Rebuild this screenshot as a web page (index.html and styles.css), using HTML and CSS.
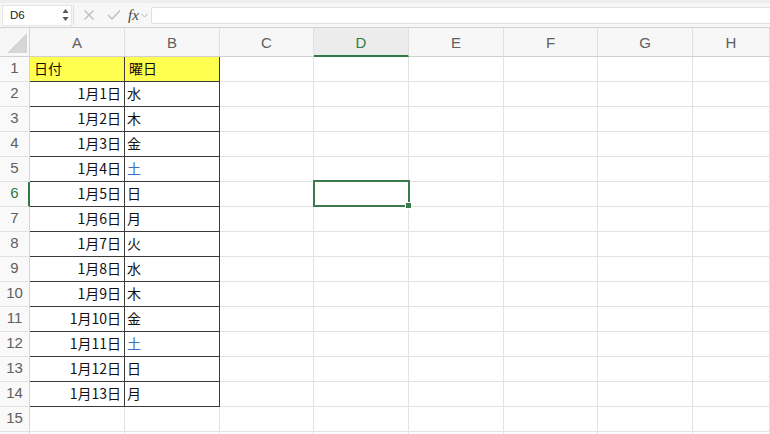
FILE: index.html
```html
<!DOCTYPE html>
<html lang="ja">
<head>
<meta charset="utf-8">
<title>Sheet</title>
<link rel="stylesheet" href="styles.css">
</head>
<body>
<div class="toolbar">
  <div class="namebox">
    <span class="ref">D6</span>
    <svg class="stepper" width="7" height="14" viewBox="0 0 7 14"><polygon points="3.5,1 6.5,5 0.5,5" fill="#555"/><polygon points="3.5,13 6.5,9 0.5,9" fill="#555"/></svg>
  </div>
  <div class="sep"></div>
  <svg class="ico x" width="12" height="12" viewBox="0 0 12 12"><path d="M1.5 1.5 L10.5 10.5 M10.5 1.5 L1.5 10.5" stroke="#bdbdbd" stroke-width="1.3" fill="none"/></svg>
  <svg class="ico ok" width="14" height="12" viewBox="0 0 14 12"><path d="M1 6 L5 10 L13 1.5" stroke="#bdbdbd" stroke-width="1.3" fill="none"/></svg>
  <span class="fx">fx</span>
  <svg class="chev" width="7" height="5" viewBox="0 0 7 5"><path d="M0.5 0.8 L3.5 4 L6.5 0.8" stroke="#b5b5b5" stroke-width="1" fill="none"/></svg>
  <div class="formula"></div>
</div>
<div class="sheet">
  <div class="corner"><svg width="20" height="20" viewBox="0 0 20 20"><polygon points="20,0 20,20 0,20" fill="#d6d6d6"/></svg></div>
  <div class="ch">A</div><div class="ch">B</div><div class="ch">C</div><div class="ch sel">D</div><div class="ch">E</div><div class="ch">F</div><div class="ch">G</div><div class="ch">H</div>

  <div class="rh">1</div><div class="c d hd">日付</div><div class="c d hd">曜日</div><div class="c"></div><div class="c"></div><div class="c"></div><div class="c"></div><div class="c"></div><div class="c"></div>
  <div class="rh">2</div><div class="c d r">1月1日</div><div class="c d">水</div><div class="c"></div><div class="c"></div><div class="c"></div><div class="c"></div><div class="c"></div><div class="c"></div>
  <div class="rh">3</div><div class="c d r">1月2日</div><div class="c d">木</div><div class="c"></div><div class="c"></div><div class="c"></div><div class="c"></div><div class="c"></div><div class="c"></div>
  <div class="rh">4</div><div class="c d r">1月3日</div><div class="c d">金</div><div class="c"></div><div class="c"></div><div class="c"></div><div class="c"></div><div class="c"></div><div class="c"></div>
  <div class="rh">5</div><div class="c d r">1月4日</div><div class="c d blue">土</div><div class="c"></div><div class="c"></div><div class="c"></div><div class="c"></div><div class="c"></div><div class="c"></div>
  <div class="rh sel">6</div><div class="c d r">1月5日</div><div class="c d">日</div><div class="c"></div><div class="c active"><span class="cursor"><span class="handle"></span></span></div><div class="c"></div><div class="c"></div><div class="c"></div><div class="c"></div>
  <div class="rh">7</div><div class="c d r">1月6日</div><div class="c d">月</div><div class="c"></div><div class="c"></div><div class="c"></div><div class="c"></div><div class="c"></div><div class="c"></div>
  <div class="rh">8</div><div class="c d r">1月7日</div><div class="c d">火</div><div class="c"></div><div class="c"></div><div class="c"></div><div class="c"></div><div class="c"></div><div class="c"></div>
  <div class="rh">9</div><div class="c d r">1月8日</div><div class="c d">水</div><div class="c"></div><div class="c"></div><div class="c"></div><div class="c"></div><div class="c"></div><div class="c"></div>
  <div class="rh">10</div><div class="c d r">1月9日</div><div class="c d">木</div><div class="c"></div><div class="c"></div><div class="c"></div><div class="c"></div><div class="c"></div><div class="c"></div>
  <div class="rh">11</div><div class="c d r">1月10日</div><div class="c d">金</div><div class="c"></div><div class="c"></div><div class="c"></div><div class="c"></div><div class="c"></div><div class="c"></div>
  <div class="rh">12</div><div class="c d r">1月11日</div><div class="c d blue">土</div><div class="c"></div><div class="c"></div><div class="c"></div><div class="c"></div><div class="c"></div><div class="c"></div>
  <div class="rh">13</div><div class="c d r">1月12日</div><div class="c d">日</div><div class="c"></div><div class="c"></div><div class="c"></div><div class="c"></div><div class="c"></div><div class="c"></div>
  <div class="rh">14</div><div class="c d r">1月13日</div><div class="c d">月</div><div class="c"></div><div class="c"></div><div class="c"></div><div class="c"></div><div class="c"></div><div class="c"></div>
  <div class="rh">15</div><div class="c"></div><div class="c"></div><div class="c"></div><div class="c"></div><div class="c"></div><div class="c"></div><div class="c"></div><div class="c"></div>
  <div class="rh"></div><div class="c"></div><div class="c"></div><div class="c"></div><div class="c"></div><div class="c"></div><div class="c"></div><div class="c"></div><div class="c"></div>
</div>
</body>
</html>
```
FILE: styles.css
```css
html, body {
  margin: 0;
  padding: 0;
  background: #ffffff;
  overflow: hidden;
}
body {
  width: 770px;
  height: 434px;
  font-family: "Noto Sans CJK JP", "Noto Sans", sans-serif;
}
.toolbar {
  height: 28px;
  box-sizing: border-box;
  background: #f7f7f7;
  border-top: 3px solid #eeeeee;
  border-bottom: 1px solid #d2d2d2;
  display: flex;
  align-items: center;
  padding-left: 2px;
}
.namebox {
  width: 70px;
  height: 21px;
  box-sizing: border-box;
  background: #ffffff;
  border: 1px solid #e6e6e6;
  display: flex;
  align-items: center;
  justify-content: space-between;
  padding: 0 2px 0 7px;
}
.ref {
  font-family: "Liberation Sans", Arial, sans-serif;
  font-size: 11.5px;
  color: #222222;
}
.stepper { display: block; }
.sep {
  width: 1px;
  height: 20px;
  background: #dedede;
  margin: 0 10px 0 1px;
}
.ico { display: block; }
.ico.x { margin-left: -1px; margin-right: 12px; }
.ico.ok { margin-right: 7px; }
.fx {
  font-family: "Liberation Serif", "Times New Roman", serif;
  font-style: italic;
  font-size: 15px;
  color: #444444;
  margin-right: 2px;
  line-height: 1;
}
.chev { display: block; margin-right: 3px; }
.formula {
  flex: 1;
  height: 17px;
  box-sizing: border-box;
  background: #ffffff;
  border: 1px solid #e0e0e0;
  border-right: none;
  border-radius: 2px 0 0 2px;
}
.sheet {
  display: grid;
  grid-template-columns: 30px 95px 95px 94px 95px 95px 94px 95px 1fr;
  grid-template-rows: 29px repeat(16, 25px);
}
.corner {
  background: #f7f7f7;
  border-right: 1px solid #d6d6d6;
  border-bottom: 1px solid #cfcfcf;
  box-sizing: border-box;
  display: flex;
  align-items: flex-end;
  justify-content: flex-end;
  padding: 0 2px 3px 0;
}
.corner svg { display: block; }
.ch {
  background: #f7f7f7;
  border-right: 1px solid #e0e0e0;
  border-bottom: 1px solid #cfcfcf;
  box-sizing: border-box;
  color: #606060;
  font-family: "Liberation Sans", Arial, sans-serif;
  font-size: 15px;
  display: flex;
  align-items: center;
  justify-content: center;
}
.ch.sel {
  background: #ececec;
  color: #2f7a45;
  border-bottom: 2px solid #2f7a45;
  padding-top: 1px;
}
.rh {
  background: #f9f9f9;
  border-right: 1px solid #d6d6d6;
  border-bottom: 1px solid #e2e2e2;
  box-sizing: border-box;
  color: #606060;
  font-family: "Liberation Sans", Arial, sans-serif;
  font-size: 15px;
  display: flex;
  align-items: center;
  justify-content: center;
  padding-bottom: 3px;
}
.rh.sel {
  color: #2f7a45;
  border-right: 2px solid #2f7a45;
  padding-left: 1px;
}
.c {
  border-right: 1px solid #e2e2e2;
  border-bottom: 1px solid #e2e2e2;
  box-sizing: border-box;
  font-size: 14px;
  color: #111111;
  display: flex;
  align-items: center;
  padding: 0 3px 3px 2px;
  white-space: nowrap;
}
.c.d {
  border-right-color: #3a3a3a;
  border-bottom-color: #3a3a3a;
}
.c.hd {
  background: #ffff4f;
  padding-left: 4px;
}
.c.r {
  justify-content: flex-end;
  padding-right: 3px;
}
.c.blue { color: #3f6fc0; }
.c.active { position: relative; }
.cursor {
  position: absolute;
  top: -2px;
  left: -1px;
  right: -2px;
  bottom: -1px;
  border: 2px solid #3b7a4d;
}
.handle {
  position: absolute;
  right: -4px;
  bottom: -4px;
  width: 5px;
  height: 5px;
  background: #3b7a4d;
  border: 1px solid #ffffff;
}
```
